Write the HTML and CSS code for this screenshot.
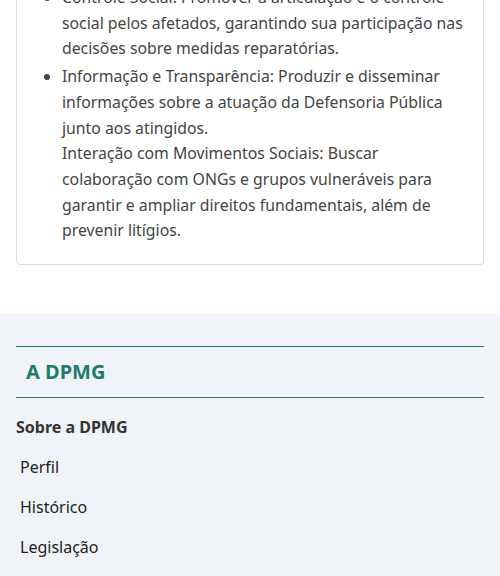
FILE: index.html
```html
<!DOCTYPE html>
<html lang="pt-BR">
<head>
<meta charset="utf-8">
<title>DPMG</title>
<link rel="stylesheet" href="styles.css">
</head>
<body>
<main class="content">
  <section class="card">
    <ul class="goals">
      <li>Controle Social: Promover a articulação e o controle social pelos afetados, garantindo sua participação nas decisões sobre medidas reparatórias.</li>
      <li>Informação e Transparência: Produzir e disseminar informações sobre a atuação da Defensoria Pública junto aos atingidos.<br>Interação com Movimentos Sociais: Buscar colaboração com ONGs e grupos vulneráveis para garantir e ampliar direitos fundamentais, além de prevenir litígios.</li>
    </ul>
  </section>
</main>
<footer class="footer">
  <div class="footer-inner">
    <h2 class="footer-title">A DPMG</h2>
    <h3 class="footer-sub">Sobre a DPMG</h3>
    <ul class="footer-links">
      <li><a href="#">Perfil</a></li>
      <li><a href="#">Histórico</a></li>
      <li><a href="#">Legislação</a></li>
    </ul>
  </div>
</footer>
</body>
</html>
```
FILE: styles.css
```css
* { box-sizing: border-box; }
html, body { margin: 0; padding: 0; }
body {
  font-family: "Noto Sans", "Open Sans", sans-serif;
  background: #fff;
  color: #444;
}
.content {
  padding: 0 16px 49px;
  margin-top: -28px;
}
.card {
  border: 1px solid #dcdcdc;
  border-radius: 4px;
  padding: 12px 15px 4px 13px;
}
.goals {
  margin: 0 0 16px;
  padding-left: 32px;
  font-size: 15.8px;
  line-height: 25.7px;
}
.goals li { margin-bottom: 2px; }
.goals li::marker { color: #444; }
.footer {
  background: #f0f4f8;
  padding: 32px 16px 40px;
}
.footer-title {
  margin: 0;
  border-top: 1px solid #1f7a6e;
  border-bottom: 1px solid #1f7a6e;
  padding: 12px 10px;
  font-size: 20px;
  font-weight: 700;
  color: #1f7a6e;
  line-height: 26px;
}
.footer-sub {
  margin: 17px 0 0;
  font-size: 16px;
  font-weight: 700;
  color: #333;
  line-height: 24px;
}
.footer-links {
  list-style: none;
  margin: 0;
  padding: 0 0 0 4px;
}
.footer-links li { padding: 8px 0; line-height: 24px; }
.footer-links li:first-child { margin-top: 8px; }
.footer-links a {
  color: #222;
  text-decoration: none;
  font-size: 16px;
}
```
